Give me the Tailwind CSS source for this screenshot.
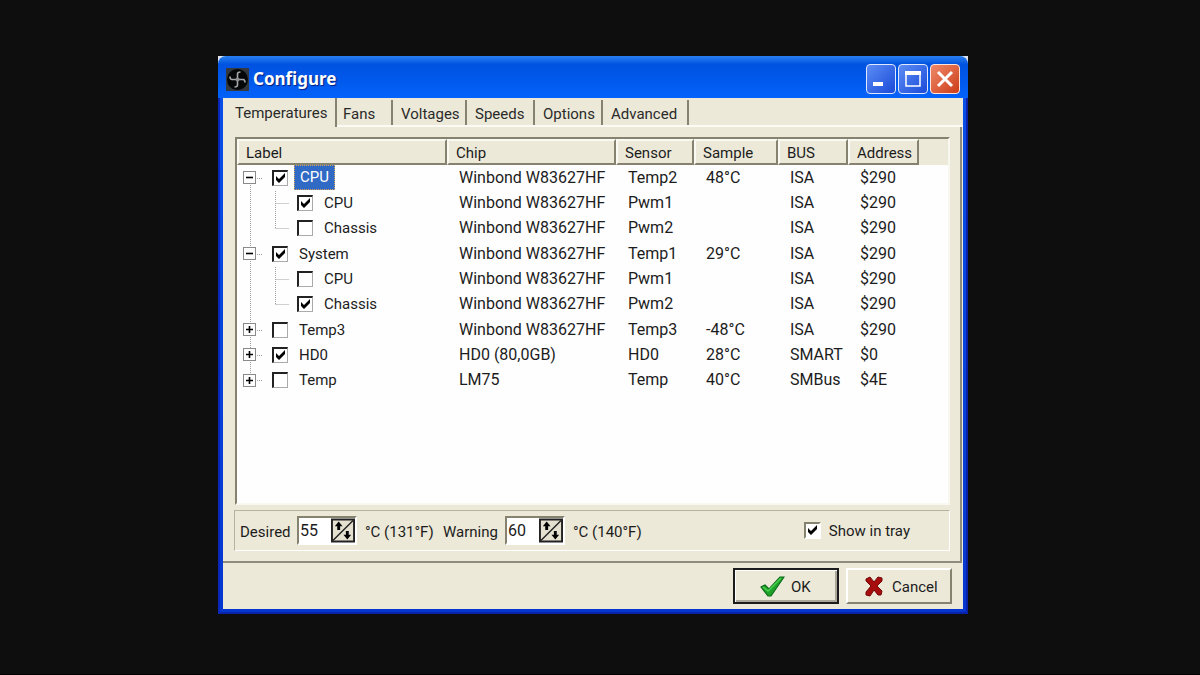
<!DOCTYPE html>
<html lang="en">
<head>
  <meta charset="UTF-8" />
  <meta name="viewport" content="width=device-width, initial-scale=1.0"/>
  <title>Configure</title>
  <script src="https://cdn.jsdelivr.net/npm/@tailwindcss/browser@4"></script>
</head>
<body class="min-h-screen flex justify-center bg-[#0e0e0e] border-b border-black pt-[56px] pb-[60px] pr-[14px] font-[Roboto,sans-serif] text-[15px] leading-[20px] text-[#1c1c1c]">
  <div class="w-full max-w-[750px] flex flex-col px-[5px] pb-[5px] bg-linear-to-b from-[#0a50ea] to-[#0636d0] shadow-[inset_2px_0_0_#0a28b8,inset_-2px_-2px_0_#0a22a8]">

    <!-- Title bar -->
    <div class="-mx-[5px] bg-[#dfe4ee]">
      <header class="h-[42px] flex items-center gap-[2px] px-2 pt-1 rounded-t-lg bg-linear-to-b from-[#2a80f0] via-[#0052e0] via-20% to-[#0362fb]">
        <svg class="w-[23px] h-[23px]" viewBox="0 0 23 23">
          <rect width="23" height="23" fill="#33393e"/>
          <circle cx="11.500" cy="11.500" r="10.500" fill="#050708"/>
          <path d="M11.500 11.500V6q0-2 3-2M11.500 11.500H17q2 0 2 3M11.500 11.500V17q0 2-3 2M11.500 11.500H6q-2 0-2-3" fill="none" stroke="#a5a8aa" stroke-width="1.600"/>
          <circle cx="11.500" cy="11.500" r="2" fill="#8c9092"/>
        </svg>
        <h1 class="pl-[2px] text-[17px] leading-[24px] font-bold text-white font-['Noto_Sans',sans-serif] text-shadow-[1px_1px_1px_#0a1f80]">Configure</h1>
        <button aria-label="Minimize" class="ml-auto w-[30px] h-[30px] rounded border border-[#dfe8ff] bg-linear-to-br from-[#5c8cf4] to-[#1c48d8]">
          <svg class="w-full h-full" viewBox="0 0 28 28"><rect x="6" y="17" width="10" height="4" fill="#fff"/></svg>
        </button>
        <button aria-label="Maximize" class="w-[30px] h-[30px] rounded border border-[#dfe8ff] bg-linear-to-br from-[#5c8cf4] to-[#1c48d8]">
          <svg class="w-full h-full" viewBox="0 0 28 28"><path d="M7 7h14v14H7z" fill="none" stroke="#fff" stroke-width="1.500"/><path d="M6 8h16" stroke="#fff" stroke-width="4"/></svg>
        </button>
        <button aria-label="Close" class="w-[30px] h-[30px] rounded border border-[#ffe4dc] bg-linear-to-br from-[#ee8868] to-[#cc3a10]">
          <svg class="w-full h-full" viewBox="0 0 28 28"><path d="M7 7l14 14M21 7L7 21" stroke="#fff" stroke-width="3"/></svg>
        </button>
      </header>
    </div>

    <main class="flex-1 flex flex-col bg-[#ece9d8]">
      <!-- Tabs -->
      <nav class="h-[29px] flex items-end text-[#2a2a2a]">
        <button class="h-full w-[114px] pl-3 text-left border-r-2 border-[#85836f]">Temperatures</button>
        <div class="flex-1 flex h-[27px] border-b-2 border-[#fbfaf5]">
          <button class="w-[56px] pl-1.5 pt-[3px] text-left border-r-2 border-[#85836f]">Fans</button>
          <button class="w-[74px] pl-2 pt-[3px] text-left border-r-2 border-[#85836f]">Voltages</button>
          <button class="w-[68px] pl-2 pt-[3px] text-left border-r-2 border-[#85836f]">Speeds</button>
          <button class="w-[68px] pl-2 pt-[3px] text-left border-r-2 border-[#85836f]">Options</button>
          <button class="w-[86px] pl-2 pt-[3px] text-left border-r-2 border-[#85836f]">Advanced</button>
        </div>
      </nav>

      <section class="flex-1 flex flex-col pl-3 pr-[10px] py-[10px] mr-px border-r-2 border-b-2 border-[#8e8c7e]">
        <!-- Sensor list -->
        <div class="relative flex-1 bg-[#fefefe] border-2 border-t-[#85836f] border-l-[#85836f] border-r-[#f8f7f0] border-b-[#f8f7f0]">
          <svg class="absolute left-0 top-0 w-[60px] h-[254px] pointer-events-none" viewBox="0 0 60 254" fill="none" stroke="#a0a0a0" stroke-dasharray="1 1">
            <path d="M13.500 46v62M13.500 122v62M13.500 198v11M13.500 223v12"/>
            <path d="M20 39.500h6M20 115.500h6M20 191.500h6M20 216.500h6M20 241.500h6"/>
            <path d="M38.500 52v38M38.500 64.500h13M38.500 89.500h13M38.500 128v38M38.500 140.500h13M38.500 165.500h13"/>
          </svg>
          <table class="w-full h-[254px] table-fixed border-collapse text-left">
            <colgroup>
              <col class="w-[210px]"><col class="w-[169px]"><col class="w-[78px]"><col class="w-[84px]"><col class="w-[70px]"><col class="w-[71px]"><col>
            </colgroup>
            <thead>
              <tr id="head" class="h-[26px] bg-[#ece9d8]"></tr>
            </thead>
            <tbody id="rows"></tbody>
          </table>
        </div>

        <!-- Limits -->
        <div class="mt-[5px] h-[41px] -ml-px flex items-center pl-[5px] border border-t-[#b5b2a0] border-l-[#b5b2a0] border-r-white border-b-white">
          <label for="desired" class="w-[57px] pt-[2px]">Desired</label>
          <div class="w-[60px] h-[29px] flex border-2 border-t-[#85836f] border-l-[#85836f] border-r-white border-b-white bg-white">
            <input id="desired" type="text" value="55" class="w-[32px] pl-px text-[16px] outline-none">
            <button aria-label="Change desired" class="flex-1"><svg class="w-full h-full" viewBox="0 0 25 25">
              <path d="M1 1h23v23H1z" fill="#e4e1d0" stroke="#222" stroke-width="2"/><path d="M2 23L23 2" stroke="#222" stroke-width="1.500"/>
              <path d="M4 8l4-5 4 5H9.500v4h-3V8zM13 17l4 5 4-5h-2.500v-4h-3v4z" fill="#000"/></svg></button>
          </div>
          <span class="pl-2 pt-[2px] w-[86px] whitespace-nowrap">°C (131°F)</span>
          <label for="warning" class="w-[62px] pt-[2px]">Warning</label>
          <div class="w-[60px] h-[29px] flex border-2 border-t-[#85836f] border-l-[#85836f] border-r-white border-b-white bg-white">
            <input id="warning" type="text" value="60" class="w-[32px] pl-px text-[16px] outline-none">
            <button aria-label="Change warning" class="flex-1"><svg class="w-full h-full" viewBox="0 0 25 25">
              <path d="M1 1h23v23H1z" fill="#e4e1d0" stroke="#222" stroke-width="2"/><path d="M2 23L23 2" stroke="#222" stroke-width="1.500"/>
              <path d="M4 8l4-5 4 5H9.500v4h-3V8zM13 17l4 5 4-5h-2.500v-4h-3v4z" fill="#000"/></svg></button>
          </div>
          <span class="pl-2 pt-[2px] whitespace-nowrap">°C (140°F)</span>
          <label class="ml-auto mr-[39px] flex items-center gap-2">
            <span class="relative w-[17px] h-[17px]">
              <input type="checkbox" checked class="peer block appearance-none w-[17px] h-[17px] bg-white border-2 border-t-[#85836f] border-l-[#85836f] border-r-white border-b-white">
              <svg class="absolute inset-0 hidden peer-checked:block pointer-events-none" viewBox="0 0 17 17"><path d="M4 6v4l3 3 6-6V3L7 9z" fill="#000"/></svg>
            </span>
            Show in tray
          </label>
        </div>
      </section>

      <!-- Buttons -->
      <footer class="h-[46px] flex justify-end items-center gap-[7px] pr-[11px]">
        <button class="w-[106px] h-[36px] flex items-center gap-1.5 pl-[25px] border-2 border-[#1c1c1c] shadow-[inset_1px_1px_0_#fff,inset_-2px_-2px_0_#aca899]">
          <svg class="w-[25px] h-[24px]" viewBox="0 0 25 24"><path d="M1 13l4-2 4 4L20 3h4L11 22H8z" fill="#1fa32a" stroke="#0b6b18" stroke-width="1.200"/><path d="M3 13l5 4L21 4" fill="none" stroke="#4cd14f" stroke-width="1.500"/></svg>
          <span class="pt-[2px]">OK</span>
        </button>
        <button class="w-[106px] h-[36px] flex items-center gap-2 pl-4 border-2 border-t-white border-l-white border-r-[#85836f] border-b-[#85836f]">
          <svg class="w-[20px] h-[22px]" viewBox="0 0 20 22"><path d="M2 4l4-2 4 5 4-5 4 1 0 3-5 5 5 5-1 4-3 0-4-5-4 6-4-1 0-3 5-6-5-5z" fill="#a80d0d" stroke="#700606"/></svg>
          <span class="pt-[2px]">Cancel</span>
        </button>
      </footer>
    </main>
  </div>

  <script>
    const columns = ['Label', 'Chip', 'Sensor', 'Sample', 'BUS', 'Address'];
    // level, expander, checked, label, chip, sensor, sample, bus, address
    const rows = [
      [0, '-', true, 'CPU', 'Winbond W83627HF', 'Temp2', '48°C', 'ISA', '$290'],
      [1, '', true, 'CPU', 'Winbond W83627HF', 'Pwm1', '', 'ISA', '$290'],
      [1, '', false, 'Chassis', 'Winbond W83627HF', 'Pwm2', '', 'ISA', '$290'],
      [0, '-', true, 'System', 'Winbond W83627HF', 'Temp1', '29°C', 'ISA', '$290'],
      [1, '', false, 'CPU', 'Winbond W83627HF', 'Pwm1', '', 'ISA', '$290'],
      [1, '', true, 'Chassis', 'Winbond W83627HF', 'Pwm2', '', 'ISA', '$290'],
      [0, '+', false, 'Temp3', 'Winbond W83627HF', 'Temp3', '-48°C', 'ISA', '$290'],
      [0, '+', true, 'HD0', 'HD0 (80,0GB)', 'HD0', '28°C', 'SMART', '$0'],
      [0, '+', false, 'Temp', 'LM75', 'Temp', '40°C', 'SMBus', '$4E'],
    ];

    document.getElementById('head').innerHTML = columns.map(c => `
      <th class="p-0 font-normal"><div class="h-[26px] pl-[7px] pt-[2px] border-2 border-t-[#faf9f2] border-l-[#faf9f2] border-r-[#85836f] border-b-[#85836f]">${c}</div></th>`).join('') + '<td></td>';

    document.getElementById('rows').innerHTML = rows.map(([level, expander, checked, label, ...cells], i) => `
      <tr>
        <td class="p-0">
          <div class="h-[25px] flex items-center ${level ? 'pl-[60px]' : 'pl-1.5'}">
            ${expander ? `<button aria-label="Toggle ${label}" class="w-[13px] h-[13px] mr-4 border border-[#8a8a8a]"><svg class="w-full h-full" viewBox="0 0 11 11"><path d="${expander === '+' ? 'M2 5.500h7M5.500 2v7' : 'M2 5.500h7'}" stroke="#000" stroke-width="1.600"/></svg></button>` : ''}
            <span class="relative w-[16px] h-[16px]">
              <input type="checkbox" id="row${i}" ${checked ? 'checked' : ''} class="peer block appearance-none w-[16px] h-[16px] bg-white border-t-2 border-l-2 border-r border-b border-t-[#222] border-l-[#222] border-r-[#aaa] border-b-[#aaa]">
              <svg class="absolute inset-0 hidden peer-checked:block pointer-events-none" viewBox="0 0 16 16"><path d="M4 6v4l3 3 6-6V3L7 9z" fill="#000"/></svg>
            </span>
            <label for="row${i}" class="${i === 0 ? 'ml-1.5 px-[5px] h-[25px] leading-[23px] bg-[#316ac5] text-white border border-dotted border-[#d8a860]' : level ? 'ml-[11px]' : 'ml-[11px]'}">${label}</label>
          </div>
        </td>
        ${cells.map((c, n) => `<td class="p-0 text-[16px] whitespace-nowrap ${n === 3 ? 'pl-[12px]' : 'pl-3'}">${c}</td>`).join('')}
        <td></td>
      </tr>`).join('');
  </script>
</body>
</html>
